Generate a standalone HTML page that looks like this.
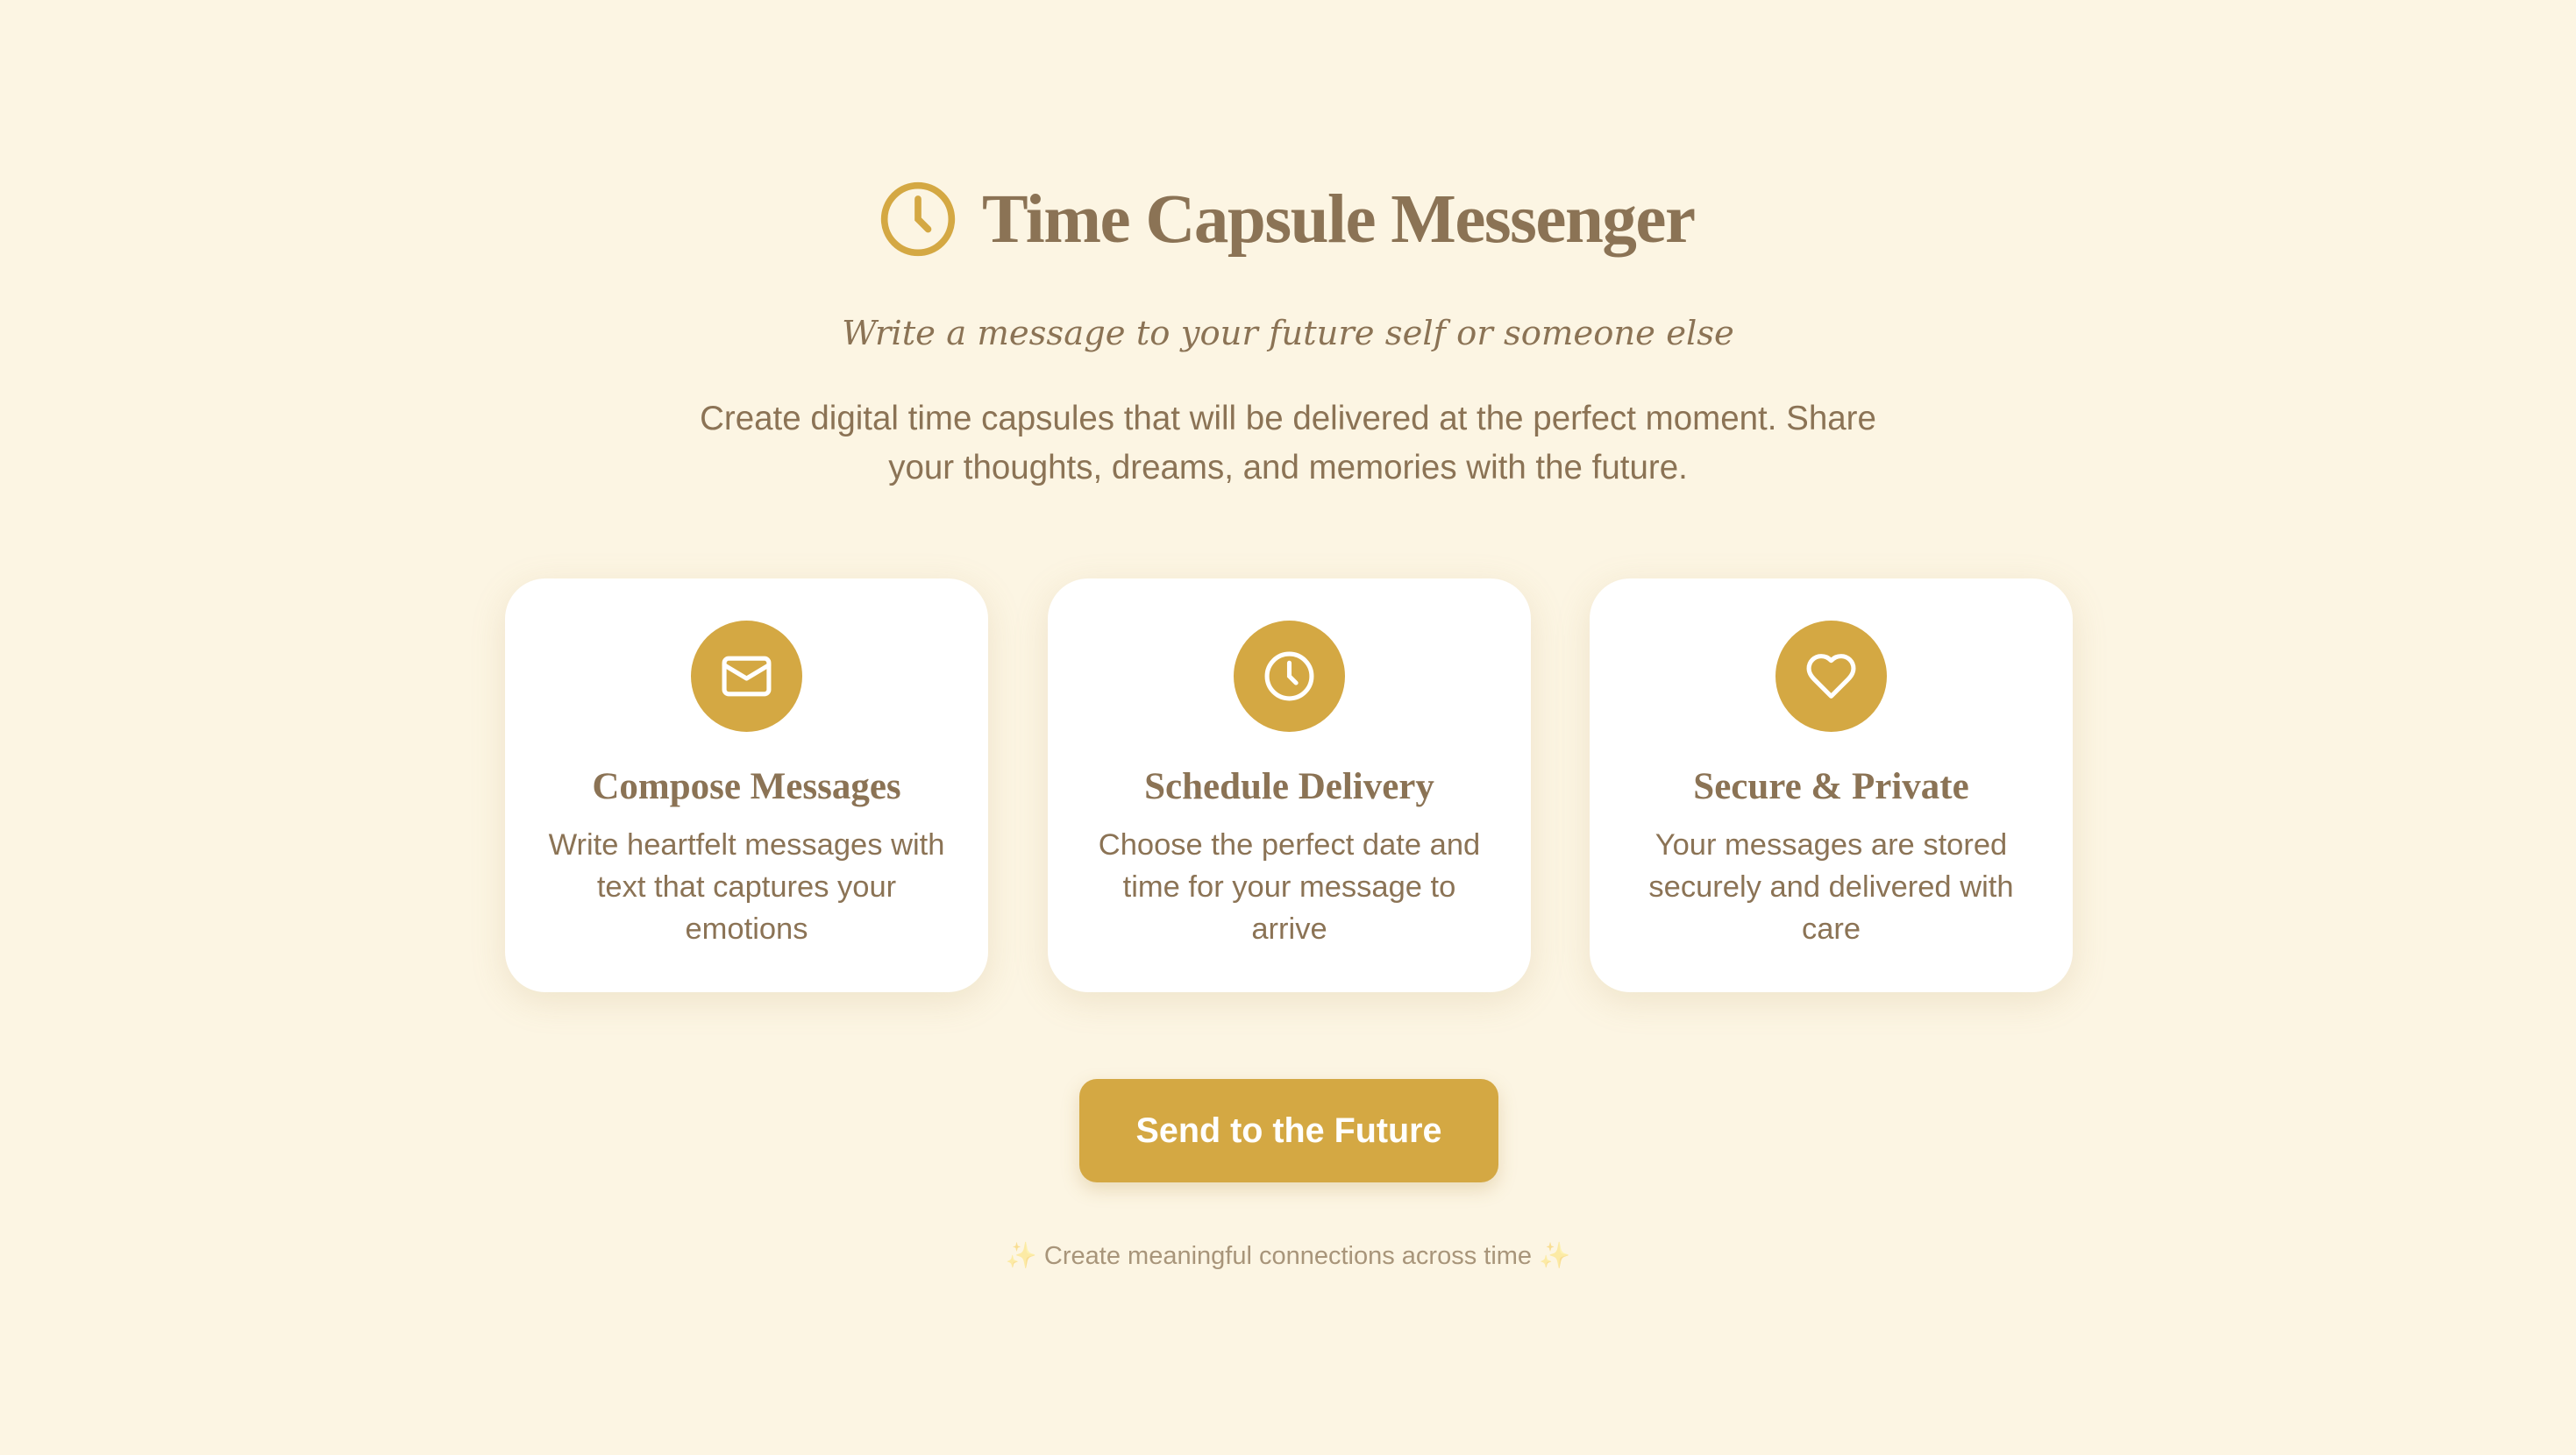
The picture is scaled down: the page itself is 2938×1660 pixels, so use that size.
<!DOCTYPE html>
<html><head><meta charset="utf-8"><style>
*{margin:0;padding:0;box-sizing:border-box}
body{width:2938px;height:1660px;background:#fcf5e3;font-family:"Liberation Sans",sans-serif;color:#8b7355;position:relative;overflow:hidden}
.abs{position:absolute;left:0;width:2938px;text-align:center}
.sub{font-family:"DejaVu Serif","Liberation Serif",serif;font-style:italic;font-size:38.5px;color:#8b7355}
.p{font-size:38.5px;line-height:56px;color:#8b7355}
.card{position:absolute;top:660px;width:551px;height:472px;background:#fff;border-radius:46px;box-shadow:0 10px 40px rgba(180,150,90,0.18);text-align:center}
.circ{position:absolute;left:212px;top:48px;width:127px;height:127px;border-radius:50%;background:#d4a843}
.circ svg{position:absolute;left:33px;top:33px}
.ct{position:absolute;top:213px;width:100%;font-family:"Liberation Serif",serif;font-weight:bold;font-size:43px}
.cd{position:absolute;top:280px;left:45px;right:45px;font-size:34.5px;line-height:48px}
.btn{position:absolute;left:1231px;top:1231px;width:478px;height:118px;border-radius:20px;background:#d4a843;color:#fff;font-weight:bold;font-size:39.5px;line-height:118px;text-align:center;box-shadow:0 8px 20px rgba(180,140,60,0.25)}
</style></head><body>
<svg style="position:absolute;left:1001px;top:204px" width="92" height="92" viewBox="0 0 24 24" fill="none" stroke="#d4a843" stroke-width="2" stroke-linecap="round"><circle cx="12" cy="12" r="10"/><path d="M12 6v6l3 3"/></svg>
<div style="position:absolute;left:1120px;top:206px;font-family:'Liberation Serif',serif;font-weight:bold;font-size:79px;white-space:nowrap;letter-spacing:-1.5px">Time Capsule Messenger</div>
<div class="abs sub" style="top:358px">Write a message to your future self or someone else</div>
<div class="abs p" style="top:450px">Create digital time capsules that will be delivered at the perfect moment. Share<br>your thoughts, dreams, and memories with the future.</div>

<div class="card" style="left:576px"><div class="circ"><svg width="61" height="61" viewBox="0 0 24 24" fill="none" stroke="#fff" stroke-width="2" stroke-linecap="round" stroke-linejoin="round"><rect x="2" y="4" width="20" height="16" rx="2"/><path d="M22 7l-10 6L2 7"/></svg></div><div class="ct">Compose Messages</div><div class="cd">Write heartfelt messages with text that captures your emotions</div></div>
<div class="card" style="left:1195px"><div class="circ"><svg width="61" height="61" viewBox="0 0 24 24" fill="none" stroke="#fff" stroke-width="2" stroke-linecap="round"><circle cx="12" cy="12" r="10"/><path d="M12 6v6l3 3"/></svg></div><div class="ct">Schedule Delivery</div><div class="cd">Choose the perfect date and time for your message to arrive</div></div>
<div class="card" style="left:1813px"><div class="circ"><svg width="61" height="61" viewBox="0 0 24 24" fill="none" stroke="#fff" stroke-width="2" stroke-linecap="round" stroke-linejoin="round"><path d="M19 14c1.5-1.5 3-3.2 3-5.5A5.5 5.5 0 0 0 16.5 3c-1.8 0-3 .5-4.5 2-1.5-1.5-2.7-2-4.5-2A5.5 5.5 0 0 0 2 8.5c0 2.3 1.5 4 3 5.5l7 7z"/></svg></div><div class="ct">Secure &amp; Private</div><div class="cd">Your messages are stored securely and delivered with care</div></div>

<div class="btn">Send to the Future</div>
<div class="abs" style="top:1416px;font-size:29px;color:#a8957a"><span style="opacity:0.35">✨</span> Create meaningful connections across time <span style="opacity:0.35">✨</span></div>
</body></html>
